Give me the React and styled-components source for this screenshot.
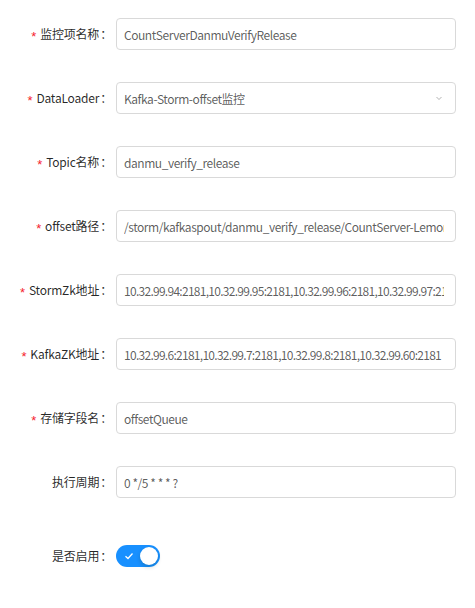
import React from "react";
import styled, { createGlobalStyle } from "styled-components";

const Global = createGlobalStyle`
  html, body { margin: 0; padding: 0; background: #fff; }
  body {
    font-family: "Noto Sans CJK SC", "Noto Sans", sans-serif;
    font-size: 12px;
    color: rgba(0,0,0,0.65);
  }
  * { box-sizing: border-box; }
`;

const Form = styled.div`
  display: flex;
  flex-direction: column;
  gap: 32px;
  padding: 18px 19px 0 0;
  width: 475px;
`;

const Row = styled.div`
  display: grid;
  grid-template-columns: 116px 1fr;
  align-items: center;
  height: 32px;
  margin-top: ${(p) => p.$extra || 0}px;
`;

const Label = styled.label`
  display: flex;
  justify-content: flex-end;
  align-items: center;
  padding-right: 7px;
  color: rgba(0,0,0,0.85);
  white-space: nowrap;
  line-height: 32px;
  letter-spacing: -0.2px;
  &::after {
    content: "：";
    margin-left: 1px;
    margin-right: -3px;
  }
`;

const Star = styled.span`
  color: #f5222d;
  font-family: "Liberation Sans", sans-serif;
  font-size: 13px;
  margin-right: 4px;
  line-height: 1;
  position: relative;
  top: 2px;
`;

const Input = styled.div`
  height: 32px;
  border: 1px solid #d9d9d9;
  border-radius: 4px;
  padding: 0 11px 0 7px;
  display: flex;
  align-items: center;
  overflow: hidden;
  white-space: nowrap;
  color: rgba(0,0,0,0.65);
  letter-spacing: ${(p) => (p.$tight ? "-0.72px" : "-0.45px")};
`;

const Text = styled.span`
  overflow: hidden;
  flex: 1;
`;

const Arrow = styled.svg`
  width: 8px;
  height: 8px;
  flex: none;
  margin-right: 1px;
`;

const Switch = styled.div`
  width: 44px;
  height: 22px;
  border-radius: 11px;
  background: #1890ff;
  display: flex;
  align-items: center;
  justify-content: space-between;
  padding: 0 2px 0 8px;
`;

const Knob = styled.div`
  width: 18px;
  height: 18px;
  border-radius: 50%;
  background: #fff;
  box-shadow: 0 2px 4px rgba(0,35,11,0.2);
`;

const fields = [
  { label: "监控项名称", req: true, value: "CountServerDanmuVerifyRelease" },
  { label: "DataLoader", req: true, value: "Kafka-Storm-offset监控", select: true },
  { label: "Topic名称", req: true, value: "danmu_verify_release" },
  { label: "offset路径", req: true, value: "/storm/kafkaspout/danmu_verify_release/CountServer-LemonWalle" },
  { label: "StormZk地址", req: true, tight: true, value: "10.32.99.94:2181,10.32.99.95:2181,10.32.99.96:2181,10.32.99.97:2181" },
  { label: "KafkaZK地址", req: true, tight: true, value: "10.32.99.6:2181,10.32.99.7:2181,10.32.99.8:2181,10.32.99.60:2181" },
  { label: "存储字段名", req: true, value: "offsetQueue" },
  { label: "执行周期", req: false, value: "0 */5 * * * ?" },
];

export default function App() {
  return (
    <>
      <Global />
      <Form>
        {fields.map((f) => (
          <Row key={f.label}>
            <Label>
              {f.req && <Star>*</Star>}
              {f.label}
            </Label>
            <Input $tight={f.tight}>
              <Text>{f.value}</Text>
              {f.select && (
                <Arrow viewBox="0 0 8 8">
                  <path d="M1.5 3 L4 5.5 L6.5 3" fill="none" stroke="rgba(0,0,0,0.3)" strokeWidth="1" />
                </Arrow>
              )}
            </Input>
          </Row>
        ))}
        <Row $extra={10}>
          <Label>是否启用</Label>
          <div>
            <Switch>
              <svg width="10" height="10" viewBox="0 0 10 10">
                <path d="M1.5 5.2 L4 7.5 L8.5 2.5" fill="none" stroke="#fff" strokeWidth="1.3" />
              </svg>
              <Knob />
            </Switch>
          </div>
        </Row>
      </Form>
    </>
  );
}
